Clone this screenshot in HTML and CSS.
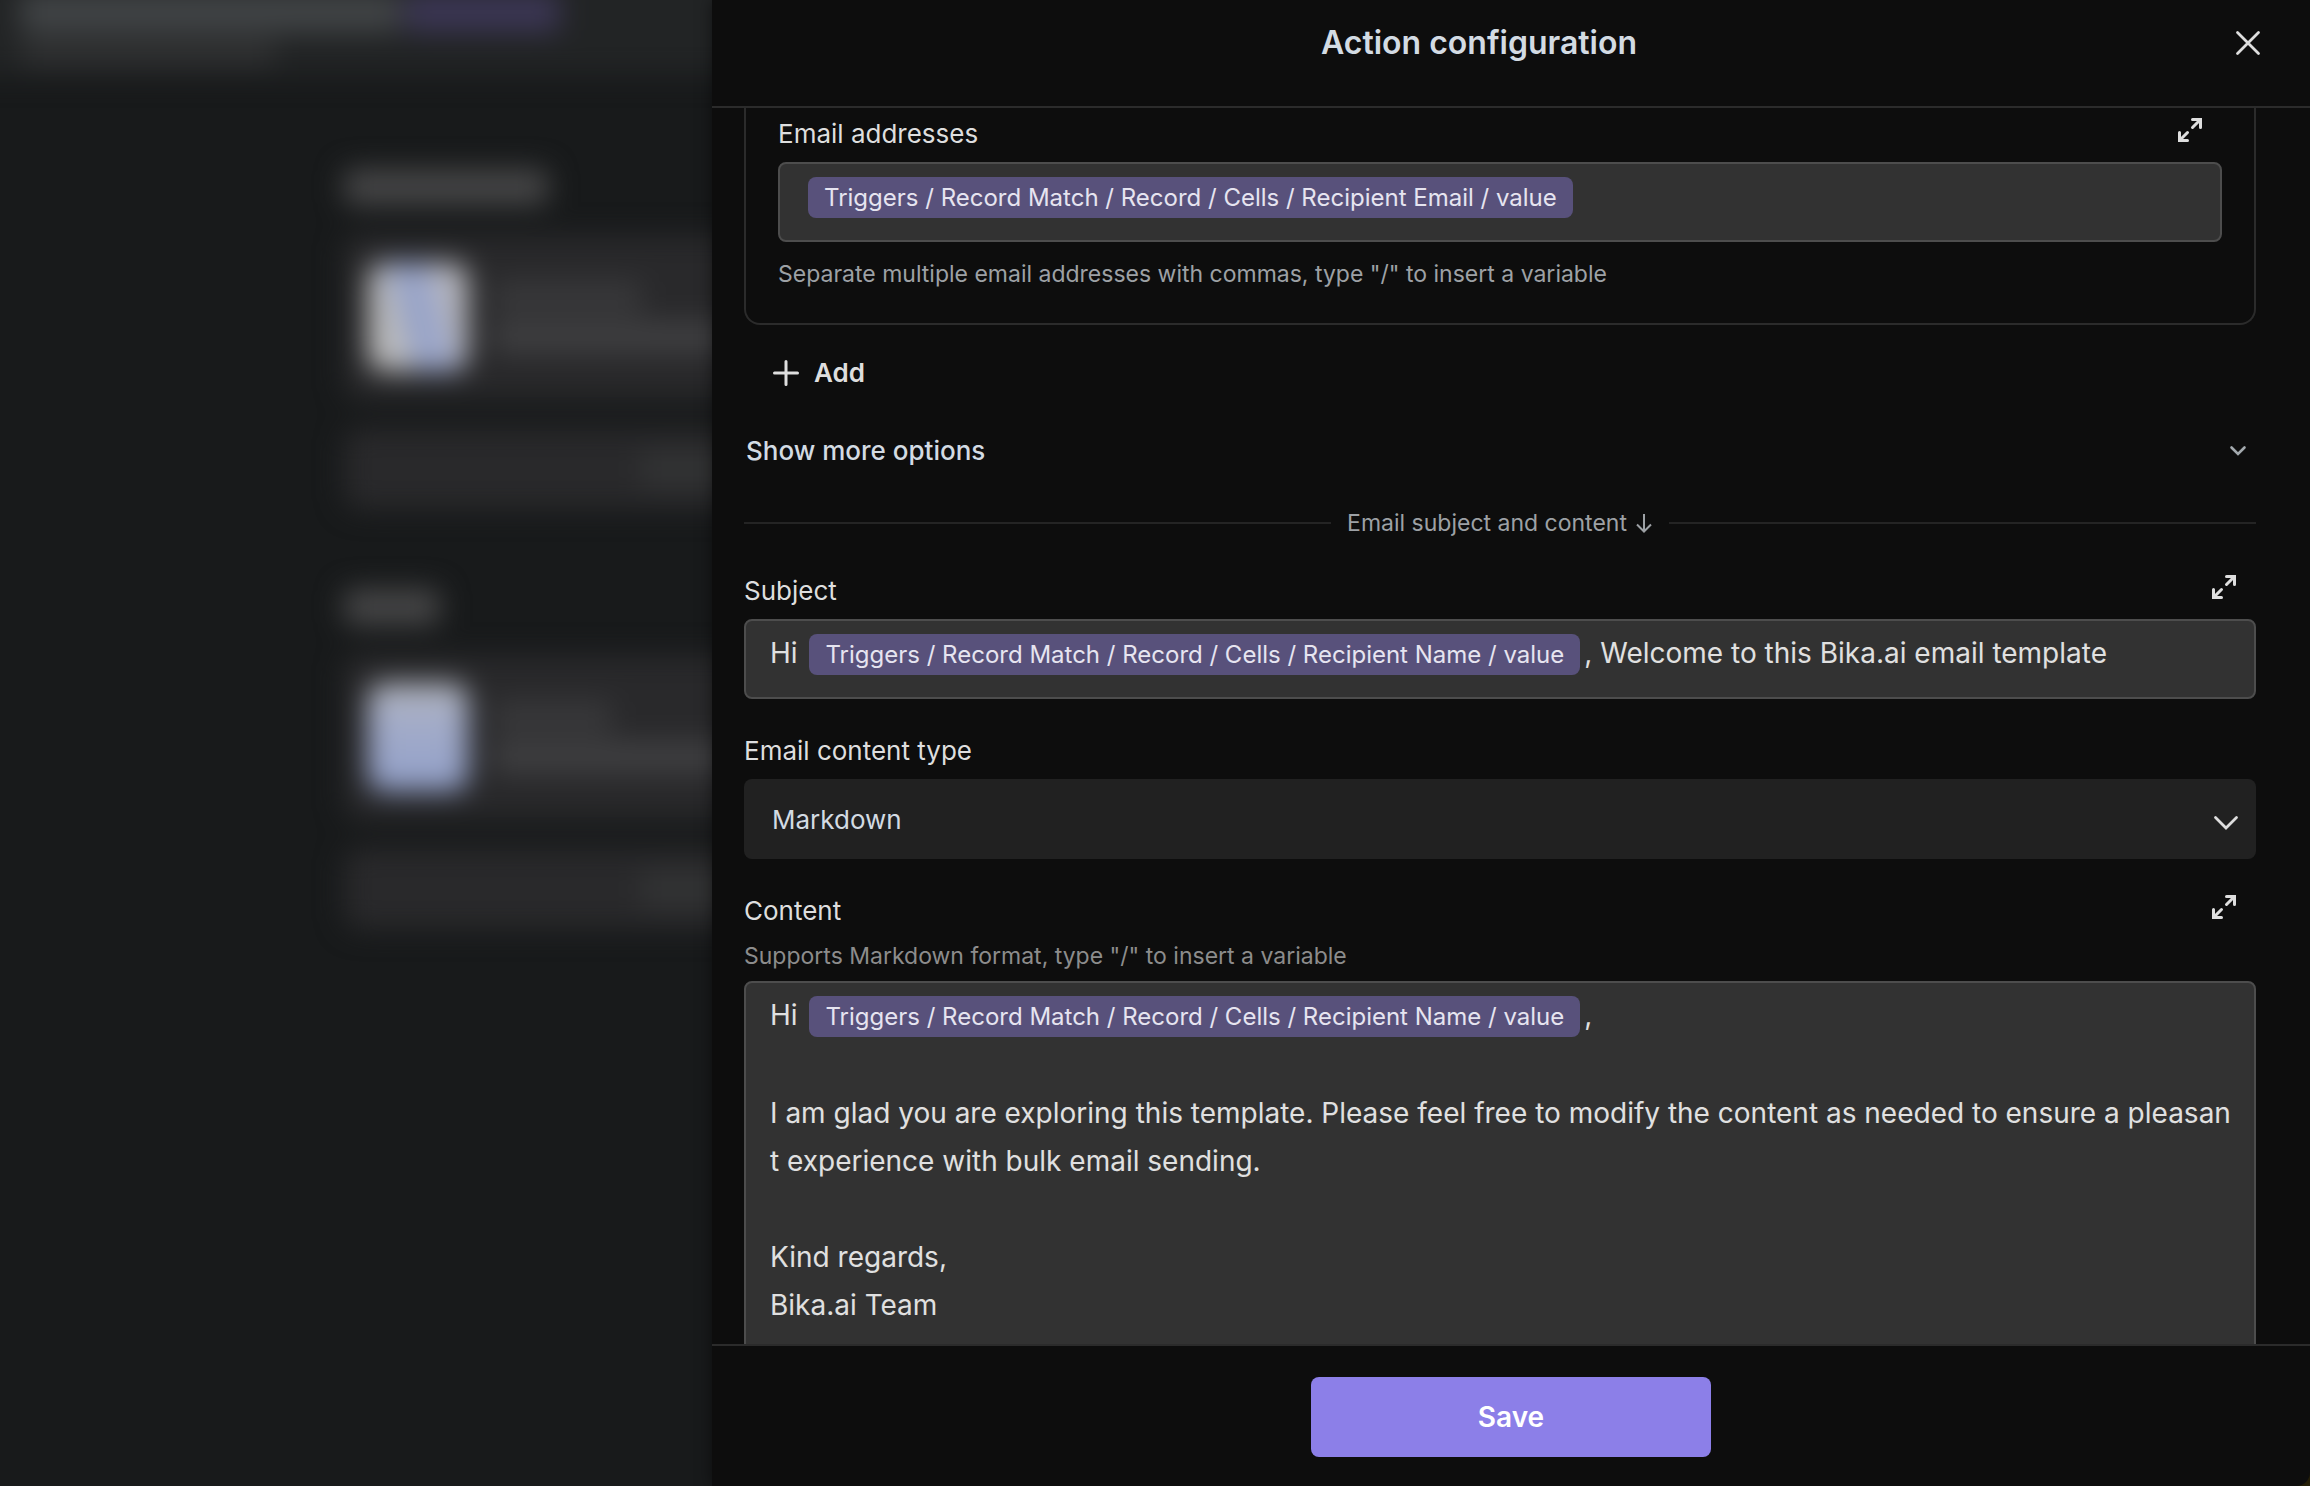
FILE: index.html
```html
<!DOCTYPE html>
<html lang="en">
<head>
<meta charset="utf-8">
<meta name="viewport" content="width=device-width, initial-scale=1">
<title>Action configuration</title>
<link rel="stylesheet" href="styles.css">
</head>
<body>
<div class="app">
  <div class="backdrop" aria-hidden="true">
    <div class="backdrop-page">
      <div class="page-head">
        <div class="head-row">
          <span class="bar bar-title"></span>
          <span class="bar bar-link"></span>
        </div>
        <span class="bar bar-subtitle"></span>
      </div>
      <div class="flow">
        <div class="flow-section">
          <span class="bar bar-heading"></span>
          <div class="flow-card">
            <span class="flow-icon flow-icon-trigger"></span>
            <div class="flow-text">
              <span class="bar bar-caption"></span>
              <span class="bar bar-name"></span>
            </div>
          </div>
          <div class="flow-add"><span class="bar bar-add"></span></div>
        </div>
        <div class="flow-section">
          <span class="bar bar-heading bar-heading-short"></span>
          <div class="flow-card">
            <span class="flow-icon flow-icon-action"></span>
            <div class="flow-text">
              <span class="bar bar-caption bar-caption-short"></span>
              <span class="bar bar-name"></span>
            </div>
          </div>
          <div class="flow-add"><span class="bar bar-add"></span></div>
        </div>
      </div>
    </div>
  </div>

  <main class="drawer" role="dialog" aria-labelledby="drawer-title">
    <header class="drawer-head">
      <h1 class="drawer-title" id="drawer-title">Action configuration</h1>
      <button class="icon-button" type="button" aria-label="Close">
        <svg class="icon" viewBox="0 0 32 32"><path d="M5.500 5.500 26.500 26.500M26.500 5.500 5.500 26.500" stroke-width="2.800"/></svg>
      </button>
    </header>

    <form class="drawer-body" id="action-form">
      <section class="recipient">
        <div class="field">
          <div class="field-head">
            <span class="label" id="emails-label">Email addresses</span>
            <button class="icon-button" type="button" aria-label="Expand email addresses">
              <svg class="icon" viewBox="0 0 32 32"><path d="M18.500 5.500H26.500V13.500M26 6 18.500 13.500M5.500 18.500V26.500H13.500M6 26 13.500 18.500" stroke-width="3"/></svg>
            </button>
          </div>
          <div class="editor" contenteditable="true" spellcheck="false" role="textbox" aria-labelledby="emails-label"><span class="chip" contenteditable="false">Triggers / Record Match / Record / Cells / Recipient Email / value</span></div>
        </div>
        <p class="hint hint-below">Separate multiple email addresses with commas, type "/" to insert a variable</p>
      </section>

      <button class="add-button" type="button">
        <svg class="icon" viewBox="0 0 32 32"><path d="M16 4.500V27.500M4.500 16H27.500" stroke-width="3"/></svg>
        Add
      </button>

      <button class="more-button" type="button" aria-expanded="false">
        Show more options
        <svg class="icon icon-muted" viewBox="0 0 32 32"><path d="M9.500 12.500 16 19 22.500 12.500" stroke-width="2.600"/></svg>
      </button>

      <div class="divider">
        <span class="divider-text">Email subject and content <svg class="arrow" viewBox="0 0 18 24"><path d="M9 3V20.500M2 13.500 9 20.500 16 13.500"/></svg></span>
      </div>

      <div class="field">
        <div class="field-head">
          <span class="label" id="subject-label">Subject</span>
          <button class="icon-button" type="button" aria-label="Expand subject">
            <svg class="icon" viewBox="0 0 32 32"><path d="M18.500 5.500H26.500V13.500M26 6 18.500 13.500M5.500 18.500V26.500H13.500M6 26 13.500 18.500" stroke-width="3"/></svg>
          </button>
        </div>
        <div class="editor" contenteditable="true" spellcheck="false" role="textbox" aria-labelledby="subject-label">Hi <span class="chip" contenteditable="false">Triggers / Record Match / Record / Cells / Recipient Name / value</span>, Welcome to this Bika.ai email template</div>
      </div>

      <div class="field">
        <div class="field-head">
          <label class="label" for="content-type">Email content type</label>
        </div>
        <div class="select-wrap">
          <select class="select" id="content-type">
            <option>Markdown</option>
            <option>HTML</option>
          </select>
          <svg class="icon select-icon" viewBox="0 0 32 32"><path d="M5.500 11.500 16 22 26.500 11.500" stroke-width="2.800"/></svg>
        </div>
      </div>

      <div class="field">
        <div class="field-head">
          <span class="label" id="content-label">Content</span>
          <button class="icon-button" type="button" aria-label="Expand content">
            <svg class="icon" viewBox="0 0 32 32"><path d="M18.500 5.500H26.500V13.500M26 6 18.500 13.500M5.500 18.500V26.500H13.500M6 26 13.500 18.500" stroke-width="3"/></svg>
          </button>
        </div>
        <p class="hint hint-plain">Supports Markdown format, type "/" to insert a variable</p>
        <div class="editor editor-tall" contenteditable="true" spellcheck="false" role="textbox" aria-multiline="true" aria-labelledby="content-label"><div>Hi <span class="chip" contenteditable="false">Triggers / Record Match / Record / Cells / Recipient Name / value</span>,</div><div><br></div><div>I am glad you are exploring this template. Please feel free to modify the content as needed to ensure a pleasant experience with bulk email sending.</div><div><br></div><div>Kind regards,</div><div>Bika.ai Team</div></div>
      </div>
    </form>

    <footer class="drawer-foot">
      <button class="save-button" type="submit" form="action-form">Save</button>
    </footer>
  </main>
</div>
</body>
</html>
```

FILE: styles.css
```css
* {
  box-sizing: border-box;
}

body {
  margin: 0;
  background: #2b2409;
  color: #dedede;
  font-family: Inter, "Liberation Sans", sans-serif;
  font-size: 26px;
  line-height: 40px;
}

button,
select {
  font: inherit;
  color: inherit;
}

button {
  padding: 0;
  border: 0;
  background: none;
  cursor: pointer;
}

.app {
  display: flex;
  height: 100vh;
  overflow: hidden;
}

/* Blurred page behind the drawer */
.backdrop {
  flex: 0 0 712px;
  overflow: hidden;
  background: #181a1b;
}

.backdrop-page {
  width: 1000px;
  margin: -40px 0 0 -40px;
  filter: blur(14px);
}

.bar {
  display: block;
  height: 36px;
  border-radius: 8px;
  background: #3f4041;
}

.page-head {
  display: flex;
  flex-direction: column;
  gap: 6px;
  height: 115px;
  padding: 32px 0 0 60px;
  background: #222425;
}

.head-row {
  display: flex;
  gap: 4px;
}

.bar-title {
  width: 380px;
  height: 40px;
  background: #414446;
}

.bar-link {
  width: 156px;
  height: 40px;
  background: #3b3654;
}

.bar-subtitle {
  width: 256px;
  height: 28px;
  background: #303132;
}

.flow {
  display: flex;
  flex-direction: column;
  gap: 80px;
  padding: 94px 0 0 384px;
}

.flow-section {
  display: flex;
  flex-direction: column;
  gap: 30px;
}

.bar-heading {
  width: 204px;
  background: #464647;
}

.bar-heading-short {
  width: 96px;
}

.flow-card {
  display: flex;
  align-items: center;
  gap: 24px;
  height: 164px;
  padding: 0 24px;
  border-radius: 16px;
  background: #29292b;
}

.flow-icon {
  width: 100px;
  height: 108px;
  border-radius: 16px;
}

.flow-icon-trigger {
  background: linear-gradient(75deg, #bababb 30%, #919fc9 46%, #9ba6cb 60%, #b6b6bc 78%);
}

.flow-icon-action {
  background: linear-gradient(#b0b2b8, #a3acc9 35%, #919fc8);
}

.flow-text {
  display: flex;
  flex-direction: column;
  gap: 8px;
}

.bar-caption {
  width: 150px;
  height: 32px;
  background: #38383a;
}

.bar-caption-short {
  width: 120px;
}

.bar-name {
  width: 320px;
  height: 32px;
  background: #3f3f41;
}

.flow-add {
  display: flex;
  align-items: center;
  height: 80px;
  padding-left: 296px;
  border-radius: 16px;
  background: #29292b;
}

.bar-add {
  width: 120px;
  background: #323334;
}

/* Drawer */
.drawer {
  position: relative;
  display: flex;
  flex: 1;
  flex-direction: column;
  min-width: 0;
  border-bottom-right-radius: 14px;
  background: #0d0d0d;
  box-shadow: 0 0 16px rgba(0, 0, 0, 0.5);
}

.drawer-head {
  display: flex;
  gap: 18px;
  align-items: flex-start;
  padding: 23px 46px 43px 32px;
  border-bottom: 2px solid #2b2b2b;
}

.drawer-title {
  flex: 1;
  margin: 0;
  color: #d3dbe3;
  font-size: 32px;
  font-weight: 600;
  line-height: 40px;
  text-align: center;
}

.icon-button {
  display: grid;
  place-items: center;
  width: 32px;
  height: 40px;
}

.icon {
  display: block;
  flex: none;
  width: 32px;
  height: 32px;
  fill: none;
  stroke: currentColor;
  stroke-linecap: round;
  stroke-linejoin: miter;
}

.icon-muted {
  color: #a3a9ae;
}

.drawer-body {
  display: flex;
  flex: 1;
  flex-direction: column;
  gap: 32px;
  min-height: 0;
  margin: 0;
  padding: 0 54px 32px 32px;
  overflow-y: auto;
  scrollbar-width: none;
}

.drawer-body > * {
  flex: none;
}

.recipient {
  padding: 6px 32px 32px;
  border: 2px solid #2b2b2b;
  border-top: 0;
  border-radius: 0 0 16px 16px;
}

.field {
  display: flex;
  flex-direction: column;
  gap: 8px;
}

.field-head {
  display: flex;
  justify-content: space-between;
  padding-right: 16px;
}

.field-head .icon-button {
  height: 32px;
}

.editor {
  min-height: 80px;
  padding: 8px 16px 8px 24px;
  border: 2px solid #4d4d4d;
  border-radius: 8px;
  background: #323232;
  color: #e0e0e0;
  font-size: 28px;
  line-height: 48px;
  white-space: pre-wrap;
  word-break: break-all;
  outline: 0;
}

.editor-tall {
  min-height: 480px;
}

.chip {
  display: inline-block;
  margin: 4px;
  padding: 0 16px;
  border-radius: 8px;
  background: #58517b;
  color: #e6e4f0;
  font-size: 24px;
  line-height: 41px;
}

.hint {
  margin: 0;
  color: #9da1a5;
  font-size: 23px;
  line-height: 34px;
}

.hint-below {
  margin-top: 15px;
}

.hint-plain {
  color: #8c8c8c;
}

.add-button {
  display: flex;
  align-items: center;
  align-self: flex-start;
  gap: 12px;
  height: 64px;
  margin: -16px 0 -10px;
  padding: 0 26px;
  font-weight: 600;
}

.more-button {
  display: flex;
  align-items: center;
  justify-content: space-between;
  height: 48px;
  padding: 0 2px;
  color: #d3dbe3;
  font-weight: 500;
}

.divider {
  display: flex;
  align-items: center;
  gap: 16px;
  color: #9da1a5;
  font-size: 23px;
  line-height: 32px;
}

.divider::before,
.divider::after {
  flex: 1;
  height: 2px;
  background: #242424;
  content: "";
}

.divider-text {
  display: flex;
  align-items: center;
  gap: 8px;
}

.arrow {
  width: 18px;
  height: 24px;
  fill: none;
  stroke: currentColor;
  stroke-width: 2;
}

.select-wrap {
  position: relative;
}

.select {
  display: block;
  width: 100%;
  height: 80px;
  padding: 2px 64px 0 28px;
  border: 0;
  border-radius: 8px;
  background: #212121;
  color: #d3dbe3;
  appearance: none;
}

.select-icon {
  position: absolute;
  top: 27px;
  right: 14px;
  pointer-events: none;
}

.drawer-foot {
  display: flex;
  justify-content: center;
  padding: 31px 32px 29px;
  border-top: 2px solid #2b2b2b;
}

.save-button {
  width: 400px;
  height: 80px;
  border-radius: 8px;
  background: #8c7fe8;
  color: #fff;
  font-size: 28px;
  font-weight: 600;
}
```
